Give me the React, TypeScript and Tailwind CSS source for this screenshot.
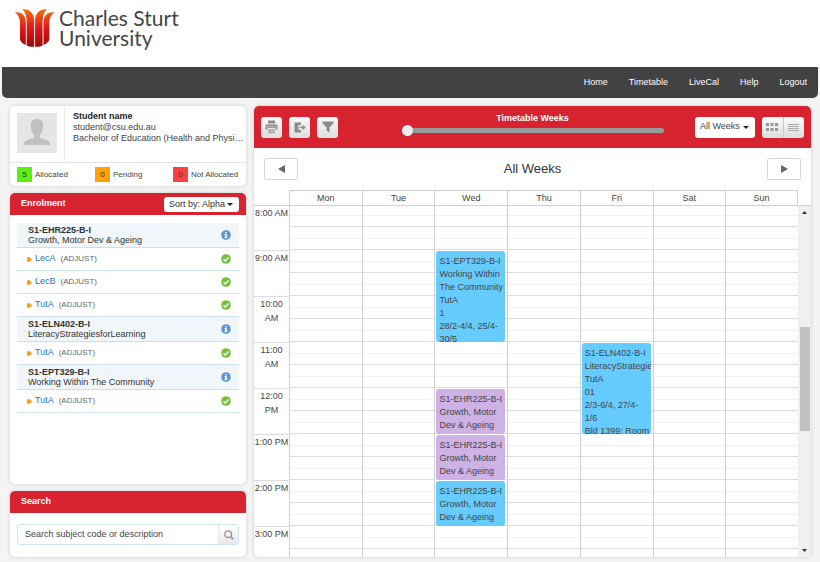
import type { ReactNode } from "react";

type Group = { name: string };
type Subject = { code: string; title: string; groups: Group[] };
type CalEvent = { day: number; slot: number; lines: string[]; tall?: boolean; tone: "blue" | "purple" };

const navItems = ["Home", "Timetable", "LiveCal", "Help", "Logout"];

const subjects: Subject[] = [
  {
    code: "S1-EHR225-B-I",
    title: "Growth, Motor Dev & Ageing",
    groups: [{ name: "LecA" }, { name: "LecB" }, { name: "TutA" }],
  },
  { code: "S1-ELN402-B-I", title: "LiteracyStrategiesforLearning", groups: [{ name: "TutA" }] },
  { code: "S1-EPT329-B-I", title: "Working Within The Community", groups: [{ name: "TutA" }] },
];

const legend = [
  { count: 5, label: "Allocated", color: "bg-[#5bef15]" },
  { count: 0, label: "Pending", color: "bg-[#ffa008]" },
  { count: 0, label: "Not Allocated", color: "bg-[#ff4040]" },
];

const days = ["Mon", "Tue", "Wed", "Thu", "Fri", "Sat", "Sun"];
const hours = ["8:00 AM", "9:00 AM", "10:00 AM", "11:00 AM", "12:00 PM", "1:00 PM", "2:00 PM", "3:00 PM"];

// slot counts half hours from 8:00 AM
const events: CalEvent[] = [
  {
    day: 2,
    slot: 2,
    tall: true,
    tone: "blue",
    lines: ["S1-EPT329-B-I", "Working Within The Community", "TutA", "1", "28/2-4/4, 25/4-30/5"],
  },
  {
    day: 4,
    slot: 6,
    tall: true,
    tone: "blue",
    lines: ["S1-ELN402-B-I", "LiteracyStrategiesforLearning", "TutA", "01", "2/3-6/4, 27/4-1/6", "Bld 1399: Room"],
  },
  { day: 2, slot: 8, tone: "purple", lines: ["S1-EHR225-B-I", "Growth, Motor Dev & Ageing"] },
  { day: 2, slot: 10, tone: "purple", lines: ["S1-EHR225-B-I", "Growth, Motor Dev & Ageing"] },
  { day: 2, slot: 12, tone: "blue", lines: ["S1-EHR225-B-I", "Growth, Motor Dev & Ageing"] },
];

function Logo() {
  return (
    <svg viewBox="0 0 40 40" className="h-10 w-10 shrink-0" aria-hidden="true">
      <defs>
        <linearGradient id="flame" gradientUnits="userSpaceOnUse" x1="0" y1="1" x2="0" y2="39">
          <stop offset="0" stopColor="#f2700f" />
          <stop offset="0.25" stopColor="#e8461a" />
          <stop offset="0.5" stopColor="#d91a1c" />
          <stop offset="1" stopColor="#9c0a0c" />
        </linearGradient>
      </defs>
      <g fill="url(#flame)">
        <path d="M0 4.500C6.500 3.500 10.800 7.500 10.800 15V37C7 35.500 5 33.500 5 30.500V15C5 10 3 6.500 0 4.500Z" />
        <path d="M7.500 1.200C14.500 0.500 19.200 5.500 19.200 12V38.700C16 38.900 13.500 38.500 11.700 37.500V14C11.700 8.500 10.500 4.500 7.500 1.200Z" />
        <path d="M31.800 1.200C24.800 0.500 20.100 5.500 20.100 12V38.700C23.300 38.900 25.800 38.500 27.600 37.500V14C27.600 8.500 28.800 4.500 31.800 1.200Z" />
        <path d="M39.300 4.500C32.800 3.500 28.500 7.500 28.500 15V37C32.300 35.500 34.300 33.500 34.300 30.500V15C34.300 10 36.300 6.500 39.300 4.500Z" />
      </g>
    </svg>
  );
}

function Header() {
  return (
    <header>
      <div className="flex h-[67px] items-start gap-1 bg-white pt-2 pl-[15px]">
        <Logo />
        <p className="font-[Lato,sans-serif] text-[21px] leading-5 text-[#454547]">
          Charles Sturt
          <br />
          University
        </p>
      </div>
      <nav className="mx-0.5 flex h-[31px] items-center justify-end gap-[21px] rounded-b-[5px] bg-[#424242] pr-[11px]">
        {navItems.map((item) => (
          <a key={item} href="#" className="text-white">
            {item}
          </a>
        ))}
      </nav>
    </header>
  );
}

function Card({ children, className = "" }: { children: ReactNode; className?: string }) {
  return (
    <section className={`flex flex-col overflow-hidden rounded-[5px] bg-white shadow-[0_0_3px_1px_#dcdcdc] ${className}`}>
      {children}
    </section>
  );
}

function Caret() {
  return (
    <svg viewBox="0 0 6 3" className="pointer-events-none absolute right-1.5 h-[3px] w-1.5" aria-hidden="true">
      <path d="M0 0H6L3 3Z" fill="#222" />
    </svg>
  );
}

function Profile() {
  return (
    <Card className="h-20">
      <div className="flex h-[57px] border-b border-[#e4e4e4]">
        <div className="w-[55px] shrink-0 border-r border-[#ececec] pt-[7px] pl-[7px]">
          <svg viewBox="0 0 40 40" className="h-10 w-10" role="img" aria-label="Student photo">
            <rect width="40" height="40" fill="#e5e5e5" />
            <path
              d="M20 6C15.500 6 13.500 9 13.800 13C14 17.500 15.500 20 17 22V24.500C14 26.500 7 26.500 6.500 32H33.500C33 26.500 26 26.500 23 24.500V22C24.500 20 26 17.500 26.200 13C26.500 9 24.500 6 20 6Z"
              fill="#c0c0c0"
            />
          </svg>
        </div>
        <div className="min-w-0 flex-1 pt-[5px] pl-2 leading-[11px]">
          <h2 className="font-bold text-[#222]">Student name</h2>
          <p>student@csu.edu.au</p>
          <p className="truncate">Bachelor of Education (Health and Physi…</p>
        </div>
      </div>
      <ul className="flex flex-1 items-center pl-[7px] text-[8px]">
        {legend.map((entry) => (
          <li key={entry.label} className="flex w-[78px] shrink-0 items-center gap-[3px]">
            <span className={`flex size-[15px] items-center justify-center text-[#333] ${entry.color}`}>
              {entry.count}
            </span>
            {entry.label}
          </li>
        ))}
      </ul>
    </Card>
  );
}

function InfoIcon() {
  return (
    <svg viewBox="0 0 10 10" className="size-2.5" aria-hidden="true">
      <circle cx="5" cy="5" r="4.800" fill="#5b97cf" />
      <path d="M4.200 2H5.800V3.200H4.200ZM3.600 4H5.800V7H6.500V8H3.500V7H4.300V5H3.600Z" fill="#fff" />
    </svg>
  );
}

function TickIcon() {
  return (
    <svg viewBox="0 0 10 10" className="size-2.5" role="img" aria-label="Allocated">
      <circle cx="5" cy="5" r="4.800" fill="#73c23c" />
      <path d="M2.600 5.200L4.300 6.900L7.500 3.500" fill="none" stroke="#fff" strokeWidth="1.400" />
    </svg>
  );
}

function Enrolment() {
  return (
    <Card className="flex-1">
      <div className="flex h-[22px] items-center justify-between bg-[#d6232f] pr-[7px] pl-[11px]">
        <h2 className="font-bold text-white">Enrolment</h2>
        <div className="relative flex items-center">
          <select
            aria-label="Sort by"
            className="h-[15px] w-[75px] appearance-none rounded-[3px] bg-white pl-[5px] leading-[15px] text-[#333]"
          >
            <option>Sort by: Alpha</option>
            <option>Sort by: Status</option>
          </select>
          <Caret />
        </div>
      </div>
      <div className="px-[7px] pt-2">
        {subjects.map((subject) => (
          <div key={subject.code}>
            <div className="flex h-[25px] items-center justify-between border-b border-[#c9e0f1] bg-[#f0f6fa] pr-2 pl-[11px] leading-[10px] text-[#333]">
              <div>
                <h3 className="font-bold">{subject.code}</h3>
                <p>{subject.title}</p>
              </div>
              <button type="button" aria-label={`About ${subject.code}`}>
                <InfoIcon />
              </button>
            </div>
            <ul>
              {subject.groups.map((group) => (
                <li key={group.name} className="flex h-[23px] items-center border-b border-[#cfe3f2] pr-2 pl-2.5">
                  <svg viewBox="0 0 5 5" className="mr-[3px] size-[5px]" aria-hidden="true">
                    <path d="M0 0.300H2.800L5 2.500L2.800 4.700H0Z" fill="#ff9c10" />
                  </svg>
                  <a href="#" className="text-[#2a74b8]">
                    {group.name}
                  </a>
                  <span className="ml-[5px] text-[8px] text-[#666]">(ADJUST)</span>
                  <span className="ml-auto">
                    <TickIcon />
                  </span>
                </li>
              ))}
            </ul>
          </div>
        ))}
      </div>
    </Card>
  );
}

function SearchPanel() {
  return (
    <Card>
      <h2 className="flex h-[22px] items-center bg-[#d6232f] pl-[11px] font-bold text-white">Search</h2>
      <form className="px-[7px] pt-[11px] pb-3" onSubmit={(e) => e.preventDefault()}>
        <div className="flex h-[21px] rounded-[3px] border border-[#cfe3f3]">
          <input
            type="text"
            aria-label="Search subject code or description"
            placeholder="Search subject code or description"
            className="min-w-0 flex-1 pl-[7px] outline-none placeholder:text-[#444]"
          />
          <button
            type="submit"
            aria-label="Search"
            className="flex w-5 items-center justify-center border-l border-[#dce8f2] bg-linear-to-b from-white to-[#e9e9e9]"
          >
            <svg viewBox="0 0 10 10" className="size-2.5" fill="none" stroke="#999" aria-hidden="true">
              <circle cx="4.200" cy="4.200" r="3.300" strokeWidth="1.400" />
              <path d="M6.600 6.600L9.300 9.300" strokeWidth="1.800" />
            </svg>
          </button>
        </div>
      </form>
    </Card>
  );
}

function ToolButton({ label, children }: { label: string; children: ReactNode }) {
  return (
    <button
      type="button"
      aria-label={label}
      className="flex size-[21px] items-center justify-center rounded-[3px] bg-linear-to-b from-[#fafafa] to-[#dedede]"
    >
      {children}
    </button>
  );
}

function Toolbar() {
  return (
    <div className="grid h-[42px] grid-cols-[1fr_262px_1fr] items-center bg-[#d6232f] px-[7px]">
      <div className="flex gap-[7px]">
        <ToolButton label="Print">
          <svg viewBox="0 0 13 14" className="h-3.5 w-[13px]" fill="#8b8b8b" aria-hidden="true">
            <path d="M3 0.500H10V3.500H3Z" />
            <path d="M1.500 4.500H11.500Q12.500 4.500 12.500 5.500V9.500H10.500V8H2.500V9.500H0.500V5.500Q0.500 4.500 1.500 4.500Z" />
            <path d="M3 9H10V12.500Q10 13.500 9 13.500H4Q3 13.500 3 12.500Z" fill="#b5b5b5" />
            <path d="M0.500 6.500H12.500V7.200H0.500Z" fill="#d5d5d5" />
          </svg>
        </ToolButton>
        <ToolButton label="Export">
          <svg viewBox="0 0 12 11" className="h-[11px] w-3" fill="#8b8b8b" aria-hidden="true">
            <path d="M0.500 0.500H7V3H4.500V8H7V10.500H0.500Z" />
            <path d="M5.500 4.700H8.500V2.800L11.800 5.500L8.500 8.200V6.300H5.500Z" />
          </svg>
        </ToolButton>
        <ToolButton label="Filter">
          <svg viewBox="0 0 12 12" className="size-3" fill="#8b8b8b" aria-hidden="true">
            <path d="M0.500 0.500H11.500V2L7.500 6.500V11.500L4.500 9.500V6.500L0.500 2Z" />
          </svg>
        </ToolButton>
      </div>
      <div className="flex flex-col pb-1.5">
        <label htmlFor="weeks" className="text-center leading-3 font-bold text-white">
          Timetable Weeks
        </label>
        <input
          id="weeks"
          type="range"
          min={0}
          max={52}
          defaultValue={0}
          className="h-3 w-full appearance-none bg-transparent [&::-webkit-slider-runnable-track]:h-[5px] [&::-webkit-slider-runnable-track]:rounded-full [&::-webkit-slider-runnable-track]:bg-[#969a9d] [&::-webkit-slider-thumb]:-mt-[3px] [&::-webkit-slider-thumb]:size-[11px] [&::-webkit-slider-thumb]:appearance-none [&::-webkit-slider-thumb]:rounded-full [&::-webkit-slider-thumb]:bg-[#ececec]"
        />
      </div>
      <div className="flex justify-end gap-[7px]">
        <div className="relative flex items-center">
          <select
            aria-label="Weeks shown"
            className="h-[21px] w-[60px] appearance-none rounded-[3px] bg-white pl-[5px] text-[#444]"
          >
            <option>All Weeks</option>
            <option>This Week</option>
          </select>
          <Caret />
        </div>
        <div className="flex h-[21px] w-[42px] overflow-hidden rounded-[3px] bg-linear-to-b from-[#fafafa] to-[#dedede]">
          <button type="button" aria-label="Grid view" className="flex flex-1 items-center justify-center">
            <svg viewBox="0 0 12 8" className="h-2 w-3" fill="#999" aria-hidden="true">
              <path d="M0 0H3V3H0ZM4.500 0H7.500V3H4.500ZM9 0H12V3H9ZM0 5H3V8H0ZM4.500 5H7.500V8H4.500ZM9 5H12V8H9Z" />
            </svg>
          </button>
          <button
            type="button"
            aria-label="List view"
            className="flex flex-1 items-center justify-center border-l border-[#d8c4c6]"
          >
            <svg viewBox="0 0 11 7" className="h-[7px] w-[11px]" fill="#aaa" aria-hidden="true">
              <path d="M0 0H11V1H0ZM0 2H11V3H0ZM0 4H11V5H0ZM0 6H11V7H0Z" />
            </svg>
          </button>
        </div>
      </div>
    </div>
  );
}

function PageButton({ label, path }: { label: string; path: string }) {
  return (
    <button
      type="button"
      aria-label={label}
      className="flex h-[22px] w-[34px] items-center justify-center rounded-[2px] border border-[#d8d8d8] bg-white"
    >
      <svg viewBox="0 0 7 8" className="h-2 w-[7px]" fill="#666" aria-hidden="true">
        <path d={path} />
      </svg>
    </button>
  );
}

function EventBlock({ event }: { event: CalEvent }) {
  const tone = event.tone === "blue" ? "bg-[#66ccff]" : "bg-[#ceb2e5]";
  const height = event.tall ? "h-[91px]" : "h-[45px]";
  return (
    <div
      className={`absolute top-px right-0.5 left-px z-10 overflow-hidden rounded-[3px] pt-1 pl-[3px] leading-[13px] text-[#444] ${tone} ${height}`}
    >
      {event.lines.map((line) => (
        <p key={line}>{line}</p>
      ))}
    </div>
  );
}

function Week() {
  const slots = hours.flatMap((hour, i) => [
    { slot: i * 2, hour },
    { slot: i * 2 + 1, hour: null },
  ]);
  return (
    <table className="w-full table-fixed border-separate border-spacing-0">
      <thead>
        <tr className="h-4">
          <td className="w-[35px] border-b border-[#d4d4d4] p-0" />
          {days.map((day) => (
            <th
              key={day}
              scope="col"
              className="border-t border-b border-l border-[#d0d0d0] p-0 leading-[14px] font-normal last:border-r"
            >
              {day}
            </th>
          ))}
        </tr>
      </thead>
      <tbody>
        {slots.map(({ slot, hour }) => (
          <tr key={slot} className={slot === 0 ? "h-[21px]" : "h-[23px]"}>
            {hour && (
              <th
                scope="row"
                rowSpan={2}
                className={`p-0 text-center align-top leading-[14px] font-normal ${slot === 0 ? "" : "border-t border-[#dcdcdc]"}`}
              >
                {hour}
              </th>
            )}
            {days.map((day, index) => (
              <td key={day} className="relative border-b border-l border-[#dcdcdc] border-l-[#d0d0d0] p-0 align-top">
                <div className={`border-b border-[#f2f2f2] ${slot === 0 ? "h-2.5" : "h-3"}`} />
                {events
                  .filter((event) => event.slot === slot && event.day === index)
                  .map((event) => (
                    <EventBlock key={event.lines[0]} event={event} />
                  ))}
              </td>
            ))}
          </tr>
        ))}
      </tbody>
    </table>
  );
}

function Scrollbar() {
  return (
    <div className="flex w-[13px] shrink-0 flex-col border-t border-[#d4d4d4]" aria-hidden="true">
      <div className="flex flex-1 flex-col items-center bg-[#f0f0f0] py-[5px]">
        <svg viewBox="0 0 5 3" className="h-[3px] w-[5px]" fill="#333">
          <path d="M0 3L2.500 0L5 3Z" />
        </svg>
        <div className="flex w-full flex-1 flex-col items-center">
          <div className="grow-49" />
          <div className="h-[104px] w-2.5 bg-[#c1c1c1]" />
          <div className="grow-51" />
        </div>
        <svg viewBox="0 0 5 3" className="h-[3px] w-[5px]" fill="#333">
          <path d="M0 0H5L2.500 3Z" />
        </svg>
      </div>
    </div>
  );
}

function Timetable() {
  return (
    <Card className="min-w-0 flex-1">
      <Toolbar />
      <div className="flex h-[42px] items-center justify-between px-2.5">
        <PageButton label="Previous" path="M7 0V8L0 4Z" />
        <h1 className="text-[13px] text-[#333]">All Weeks</h1>
        <PageButton label="Next" path="M0 0V8L7 4Z" />
      </div>
      <div className="flex h-0 min-h-[360px] grow overflow-hidden">
        <div className="min-w-0 flex-1 overflow-hidden">
          <Week />
        </div>
        <div className="flex pt-[15px]">
          <Scrollbar />
        </div>
      </div>
    </Card>
  );
}

export default function App() {
  return (
    <div className="flex min-h-screen flex-col bg-[#f4f4f4] font-['Liberation_Sans',Arial,sans-serif] text-[9px] text-[#444]">
      <Header />
      <main className="flex flex-1 gap-2 pt-2 pr-[9px] pb-[5px] pl-2.5">
        <aside className="flex w-[236px] shrink-0 flex-col gap-[7px]">
          <Profile />
          <Enrolment />
          <SearchPanel />
        </aside>
        <Timetable />
      </main>
    </div>
  );
}
